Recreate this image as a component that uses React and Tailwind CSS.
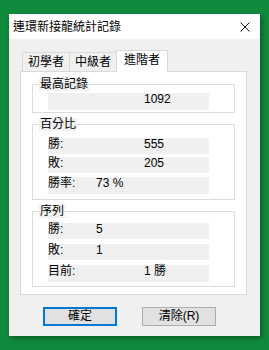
export default function App() {
  const font = { fontFamily: '"Liberation Sans", "Noto Sans CJK TC", sans-serif' };
  const Row = ({ label, value, at = 96, h = 16, mt = 0 }) => (
    <div
      className={`flex ml-[15px] w-[161px] bg-[#f0f0f0] text-[12px] leading-[13px] text-black`}
      style={{ height: h, marginTop: mt }}
    >
      <span className="w-[48px] shrink-0">{label}</span>
      <span style={{ marginLeft: at - 48 }}>{value}</span>
    </div>
  );
  return (
    <div
      className="w-[269px] h-[350px] bg-[#108a3c] pt-[14px] pl-[9px] overflow-hidden"
      style={font}
    >
      <div className="w-[251px] h-[322px] bg-[#f0f0f0] shadow-[2px_2px_5px_rgba(0,40,0,0.45)] flex flex-col">
        <div className="h-[25px] bg-white flex items-center justify-between pl-[4px] pr-[10px] text-[12px] text-black">
          <span>連環新接龍統計記錄</span>
          <svg width="10" height="10" viewBox="0 0 10 10">
            <path d="M0.5 0.5 L9.5 9.5 M9.5 0.5 L0.5 9.5" stroke="#111" strokeWidth="1" />
          </svg>
        </div>
        <div className="pl-[11px] pt-[11px]">
          <div className="flex items-end ml-[2px] h-[21px] text-[12px] text-black">
            <div className="w-[48px] h-[19px] border border-b-0 border-[#d9d9d9] bg-[#f0f0f0] flex items-center justify-center leading-[13px]">
              初學者
            </div>
            <div className="w-[47px] h-[19px] border border-l-0 border-b-0 border-[#d9d9d9] bg-[#f0f0f0] flex items-center justify-center leading-[13px]">
              中級者
            </div>
            <div className="relative z-10 -ml-px w-[52px] h-[22px] -mb-px border border-b-0 border-[#d9d9d9] bg-white flex items-start justify-center pt-[3px] leading-[13px]">
              進階者
            </div>
          </div>
          <div className="w-[227px] h-[224px] border border-[#d9d9d9] bg-white pt-[12px] px-[11px]">
            <div className="border border-[#dcdcdc] pb-[2px]">
              <div className="-mt-[7px] ml-[6px] w-fit px-[1px] h-[13px] leading-[13px] bg-[#f0f0f0] text-[12px] text-black">
                最高記錄
              </div>
              <Row label="" value="1092" mt={2} h={17} />
            </div>
            <div className="mt-[11px] border border-[#dcdcdc] pb-[5px]">
              <div className="-mt-[7px] ml-[6px] w-fit px-[1px] h-[13px] leading-[13px] bg-[#f0f0f0] text-[12px] text-black">
                百分比
              </div>
              <Row label="勝:" value="555" mt={7} />
              <Row label="敗:" value="205" mt={3} />
              <Row label="勝率:" value="73 %" at={48} mt={4} h={17} />
            </div>
            <div className="mt-[11px] border border-[#dcdcdc] pb-[4px]">
              <div className="-mt-[7px] ml-[6px] w-fit px-[1px] h-[13px] leading-[13px] bg-[#f0f0f0] text-[12px] text-black">
                序列
              </div>
              <Row label="勝:" value="5" at={48} mt={5} />
              <Row label="敗:" value="1" at={48} mt={5} />
              <Row label="目前:" value="1 勝" mt={5} h={17} />
            </div>
          </div>
          <div className="flex gap-[25px] ml-[23px] mt-[12px] text-[12px] text-black">
            <button className="w-[74px] h-[19px] border-2 border-[#0078d7] bg-[#e1e1e1] flex items-center justify-center leading-[13px]">
              確定
            </button>
            <button className="w-[74px] h-[19px] border border-[#adadad] bg-[#e1e1e1] flex items-center justify-center leading-[13px]">
              清除(R)
            </button>
          </div>
        </div>
      </div>
    </div>
  );
}
